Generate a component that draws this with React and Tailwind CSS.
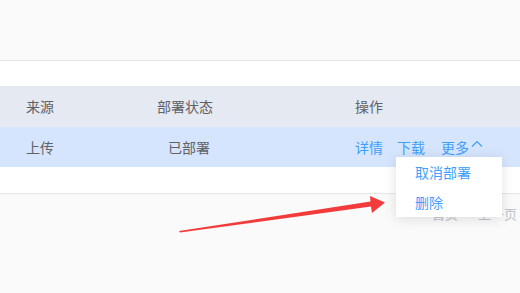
export default function App() {
  const font = { fontFamily: '"Noto Sans CJK SC", "Noto Sans", sans-serif' };
  return (
    <div className="relative w-[520px] h-[293px] overflow-hidden bg-[#fafafa] text-[14px] text-[#606266]" style={font}>
      <div className="h-[61px] bg-[#fafafa] border-b border-[#e6e6e6]" />
      <div className="bg-white border-b border-[#e6e6e6]">
        <div className="h-[25px]" />
        <div className="grid grid-cols-[157px_198px_1fr] h-[41px] items-center bg-[#e5e9f2] text-[#5f6167]">
          <div className="pl-[26px]">来源</div>
          <div>部署状态</div>
          <div>操作</div>
        </div>
        <div className="grid grid-cols-[157px_198px_1fr] h-[40px] items-center bg-[#d5e5fd]">
          <div className="pl-[26px]">上传</div>
          <div className="pl-[11px]">已部署</div>
          <div className="flex items-center text-[#409eff]">
            <span>详情</span>
            <span className="ml-[14px]">下载</span>
            <span className="ml-[16px] flex items-center">
              更多
              <svg width="12" height="8" viewBox="0 0 12 8" className="ml-[2px] -mt-[6px]">
                <path d="M1 6.5 L6 1.5 L11 6.5" fill="none" stroke="#409eff" strokeWidth="1.2" />
              </svg>
            </span>
          </div>
        </div>
        <div className="h-[26px]" />
      </div>
      <div className="flex h-[40px] items-center pl-[432px] gap-[20px] text-[13px] text-[#c0c4cc] whitespace-nowrap">
        <span>首页</span>
        <span>上一页</span>
      </div>

      <div className="absolute left-[396px] top-[157px] w-[106px] bg-white shadow-[0_2px_12px_rgba(0,0,0,0.12)] text-[#409eff]">
        <div className="h-[30px] flex items-center pl-[19px]">取消部署</div>
        <div className="h-[30px] flex items-center pl-[19px]">删除</div>
      </div>

      <svg className="absolute left-0 top-0" width="520" height="293" viewBox="0 0 520 293">
        <polygon
          points="179,231 370.5,201.5 370,196 385,202.5 372,213 371,206.5 180,232.5"
          fill="#f33b3b"
        />
      </svg>
    </div>
  );
}
